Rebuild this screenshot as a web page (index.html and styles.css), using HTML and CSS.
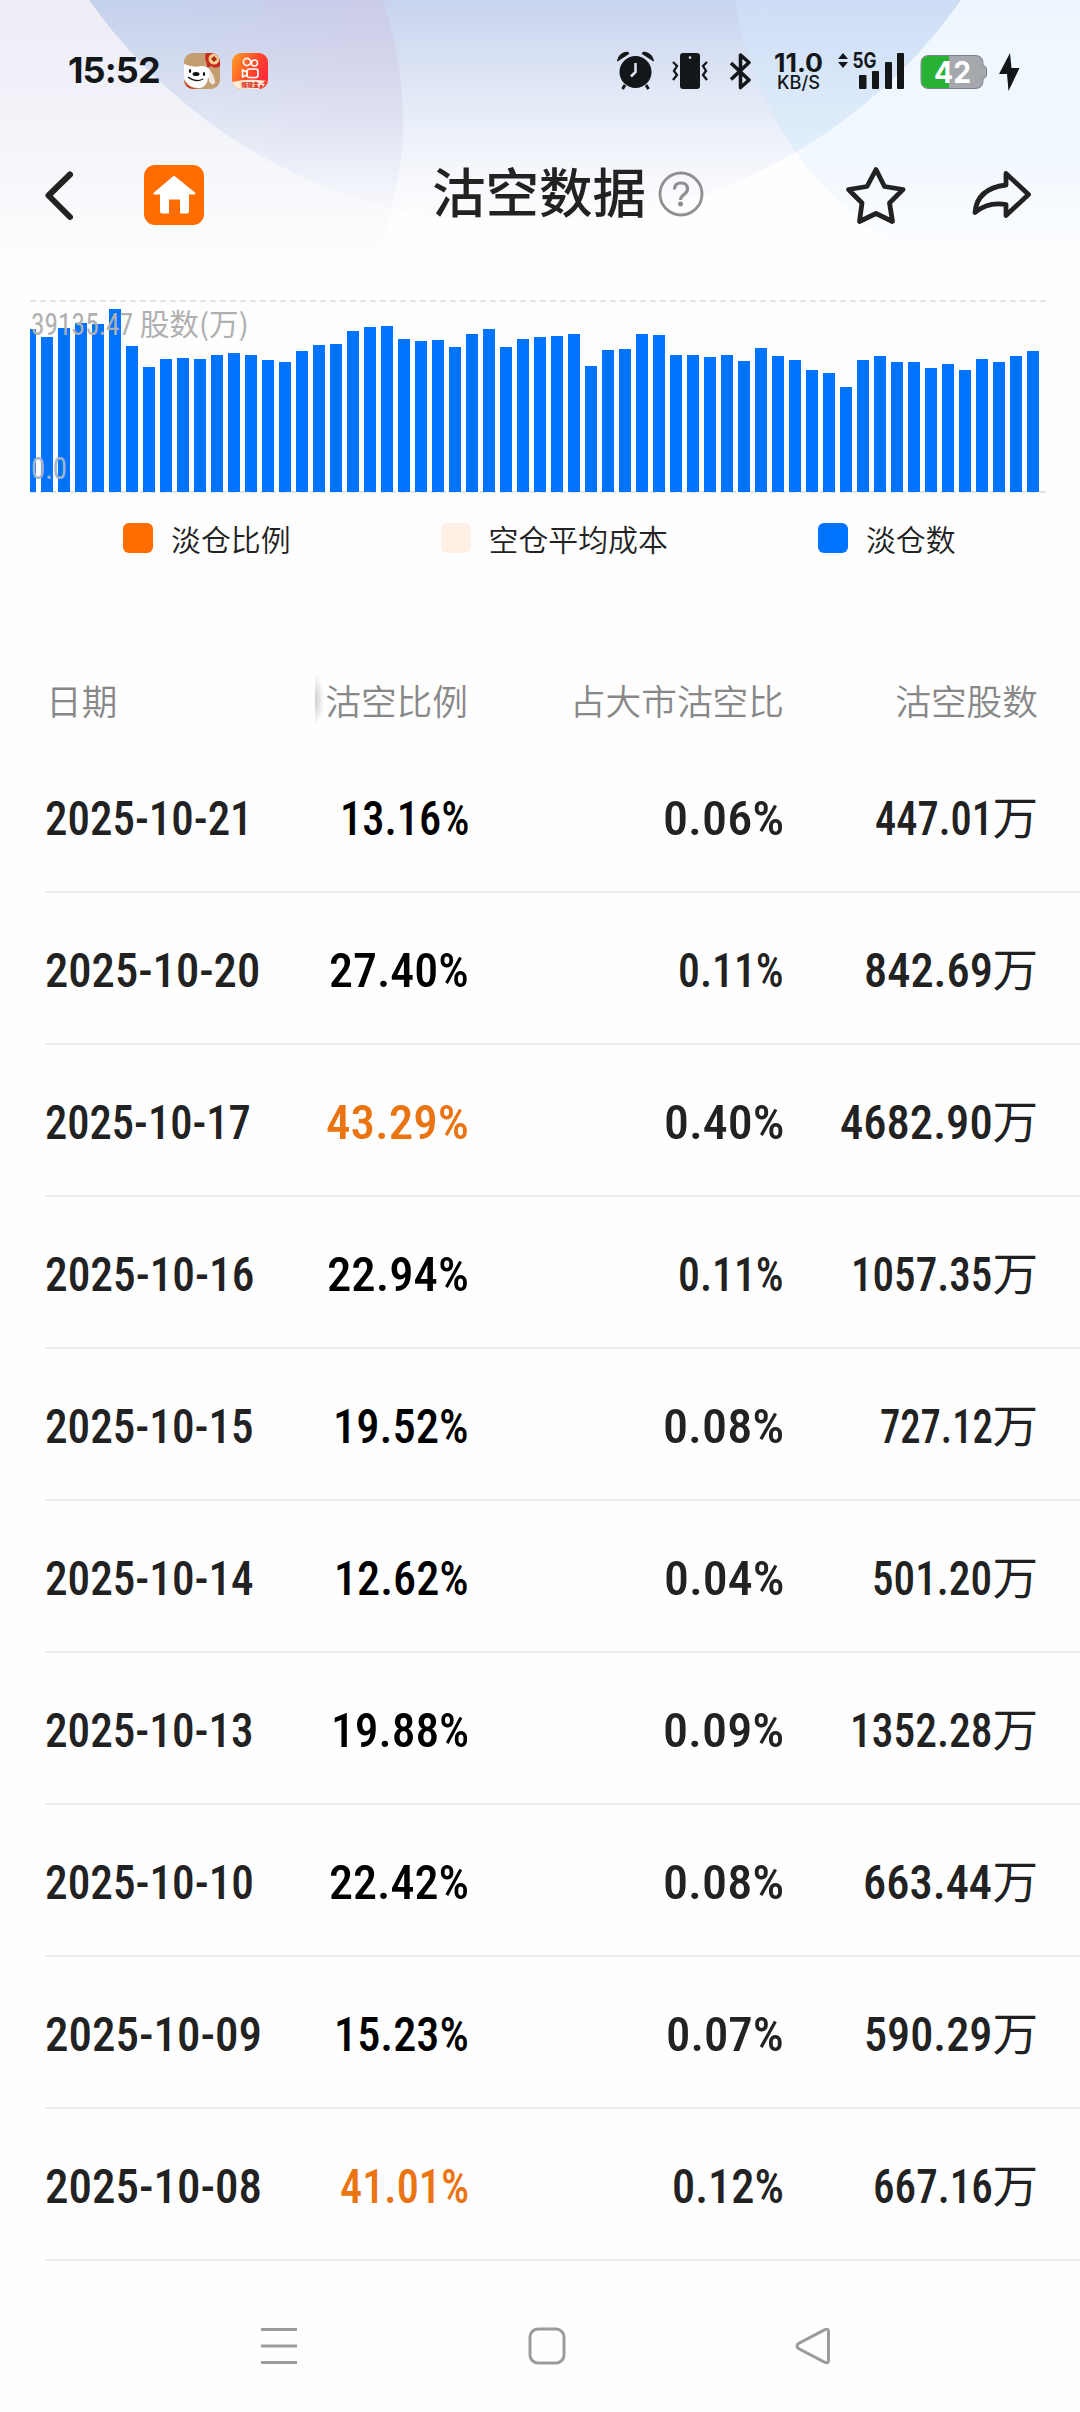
FILE: index.html
```html
<!DOCTYPE html>
<html lang="zh-CN">
<head>
    <meta charset="UTF-8">
    <meta name="viewport" content="width=device-width, initial-scale=1.0">
    <title>沽空数据</title>
    <link rel="stylesheet" href="styles.css">
</head>
<body>
    <svg class="fundo" viewBox="0 0 1080 280">
        <defs>
            <linearGradient id="gA" gradientUnits="userSpaceOnUse" x1="0" y1="0" x2="0" y2="228">
                <stop offset="0" stop-color="#c8d3ee"/>
                <stop offset=".45" stop-color="#e4ebf7"/>
                <stop offset=".8" stop-color="#f8f9fd"/>
                <stop offset="1" stop-color="#fefefe"/>
            </linearGradient>
            <linearGradient id="gB" gradientUnits="userSpaceOnUse" x1="0" y1="0" x2="0" y2="270">
                <stop offset="0" stop-color="#eeecf6"/>
                <stop offset=".4" stop-color="#f1f3f9"/>
                <stop offset="1" stop-color="#fefefe"/>
            </linearGradient>
            <linearGradient id="gC" gradientUnits="userSpaceOnUse" x1="0" y1="0" x2="0" y2="270">
                <stop offset="0" stop-color="#eef7ff"/>
                <stop offset=".6" stop-color="#f2f8ff"/>
                <stop offset="1" stop-color="#fefefe"/>
            </linearGradient>
            <linearGradient id="gAB" gradientUnits="userSpaceOnUse" x1="0" y1="0" x2="0" y2="210">
                <stop offset="0" stop-color="#c5d0eb"/>
                <stop offset=".5" stop-color="#dce3f2"/>
                <stop offset="1" stop-color="#f8f9fd"/>
            </linearGradient>
            <radialGradient id="gRosa" gradientUnits="userSpaceOnUse" cx="370" cy="10" r="190">
                <stop offset="0" stop-color="#dcb8dc" stop-opacity=".2"/>
                <stop offset="1" stop-color="#dcb8dc" stop-opacity="0"/>
            </radialGradient>
            <linearGradient id="gAC" gradientUnits="userSpaceOnUse" x1="0" y1="0" x2="0" y2="155">
                <stop offset="0" stop-color="#cdddf5"/>
                <stop offset="1" stop-color="#e2effb"/>
            </linearGradient>
            <clipPath id="cA"><circle cx="525" cy="-307" r="533"/></clipPath>
        </defs>
        <circle cx="43" cy="120" r="360" fill="url(#gB)"/>
        <circle cx="1084" cy="-50" r="352" fill="url(#gC)"/>
        <circle cx="525" cy="-307" r="533" fill="url(#gA)"/>
        <g clip-path="url(#cA)">
            <circle cx="43" cy="120" r="360" fill="url(#gAB)"/>
            <circle cx="43" cy="120" r="360" fill="url(#gRosa)"/>
            <circle cx="1084" cy="-50" r="352" fill="url(#gAC)"/>
        </g>
    </svg>

    <div id="status">
        <span class="hora">15:52</span>
        <svg class="app" width="36" height="36" viewBox="0 0 36 36">
            <clipPath id="cApp"><rect width="36" height="36" rx="9"/></clipPath>
            <g clip-path="url(#cApp)">
                <rect width="36" height="36" fill="#c49d70"/>
                <path d="M22 0h14v13c-4 3-8 1-9 0l-4 2v-4q-3-6-1-11z" fill="#c72a1d"/>
                <circle cx="30" cy="6" r="5.5" fill="#f7c98a"/>
                <path d="M30 3l3 3-3 3-3-3z" fill="#a9281c"/>
                <path d="M0 28q5 8 15 8H4q-4-2-4-8z" fill="#d5281c"/>
                <path d="M0 11q10 4 17 2 7-1 10 6l4 10q-2 4-5 0l-2-5q0 9-8 11-10 1-16-9z" fill="#fff"/>
                <path d="M25 18q5 2 6 12-4 4-6-3z" fill="#eee7e0"/>
                <ellipse cx="12" cy="21" rx="3.5" ry="2" fill="#161210"/>
                <ellipse cx="6" cy="18" rx="1.2" ry="2" fill="#161210"/>
                <ellipse cx="20" cy="21" rx="1.2" ry="2" fill="#161210"/>
                <path d="M4 24q8 6 15 2" fill="none" stroke="#161210" stroke-width="1.2"/>
            </g>
        </svg>
        <svg class="app" width="36" height="36" viewBox="0 0 36 36">
            <linearGradient id="gK" x1="0" y1="0" x2="1" y2=".5">
                <stop offset="0" stop-color="#ffa325"/>
                <stop offset=".6" stop-color="#ff4a2a"/>
                <stop offset="1" stop-color="#ff2a3a"/>
            </linearGradient>
            <g clip-path="url(#cApp)">
                <rect width="36" height="36" fill="url(#gK)"/>
                <path d="M0 29q16-4 36-1v8H0z" fill="#fdebd3"/>
                <path d="M36 27v9h-9q1-7 9-9z" fill="#f2402c"/>
                <path d="M32 28l-3 4h2l-1 3 3-4h-2z" fill="#fff"/>
                <g fill="none" stroke="#fff" stroke-width="1.6">
                    <circle cx="15" cy="9" r="3.600"/>
                    <circle cx="22.500" cy="10" r="3"/>
                    <rect x="15" y="16" width="11" height="8.500" rx="2.500"/>
                    <path d="M15 19l-4.500-2v7l4.500-2z"/>
                </g>
            </g>
            <text class="txtApp" x="9" y="34">领现金</text>
        </svg>
        <svg class="sistema" width="410" height="44" viewBox="612 48 410 44" fill="#14171a">
            <!-- alarme -->
            <g>
                <circle cx="635.500" cy="71" r="16"/>
                <path d="M617.500 60q1-8 10-9l1.500 1.500zM653.500 60q-1-8-10-9l-1.500 1.500z" stroke="#14171a" stroke-width="1"/>
                <path d="M625 84l-2.500 4M646 84l2.500 4" stroke="#14171a" stroke-width="3"/>
                <path d="M635.500 62v9l-4.500 4.500" fill="none" stroke="#dfe6f4" stroke-width="2.500"/>
            </g>
            <!-- vibrar -->
            <rect x="680" y="52" width="20" height="36" rx="3"/>
            <circle cx="690" cy="56.500" r="1.300" fill="#dfe6f4"/>
            <path d="M673 61l4 4-3 5 3 4-4 5M707 61l-4 4 3 5-3 4 4 5" fill="none" stroke="#14171a" stroke-width="2.300"/>
            <!-- bluetooth -->
            <path d="M731 62l18 17-8.500 7.500V54l8.500 7.500-18 17" fill="none" stroke="#14171a" stroke-width="3.600" stroke-linejoin="round"/>
            <text class="vel" x="774" y="71" textLength="49" lengthAdjust="spacingAndGlyphs">11.0</text>
            <text class="kbs" x="777" y="87.500" textLength="43" lengthAdjust="spacingAndGlyphs">KB/S</text>
            <!-- sinal -->
            <path d="M838 58l5-6 5 6zM838 61h10l-5 6z"/>
            <text class="g5" x="852.500" y="66.500" textLength="24" lengthAdjust="spacingAndGlyphs">5G</text>
            <rect x="859" y="74" width="7.500" height="14" rx="1"/>
            <rect x="872" y="70" width="7" height="18" rx="1"/>
            <rect x="885" y="61" width="7" height="27" rx="1"/>
            <rect x="897" y="52" width="7" height="36" rx="1"/>
            <!-- bateria -->
            <path d="M929 54.500h46q8 0 8 8v2.500h1.500q2 1 2 3v6q0 2-2 3h-1.500v2.500q0 8-8 8h-46q-8 0-8-8v-17q0-8 8-8z" fill="#a5a8ad" stroke="#7b8084"/>
            <path d="M949 55h-20q-7.500 0-7.500 7.500v17q0 7.500 7.500 7.500h20z" fill="#27b234"/>
            <text class="bat" x="934" y="82" textLength="37" lengthAdjust="spacingAndGlyphs">42</text>
            <path d="M1010 52l-11 21h8l1.500 17 11-23h-8z"/>
        </svg>
    </div>

    <div id="topo">
        <svg class="voltar" width="32" height="56" viewBox="44 166 32 56">
            <path d="M71 173.500L49.500 194.500 71 216" class="traco" stroke-width="6"/>
        </svg>
        <svg class="casa" width="60" height="60" viewBox="0 0 60 60">
            <rect width="60" height="60" rx="11" fill="#ff6d00"/>
            <path d="M30 10.500l21 17q1 2-1 2h-5v17q0 2-2 2h-7v-14H25v14h-7q-2 0-2-2v-17h-5q-3 0-1-2z" fill="#fff"/>
        </svg>
        <h1>沽空数据</h1>
        <svg class="ajuda" width="46" height="46" viewBox="0 0 46 46">
            <circle cx="23" cy="22" r="21" fill="none" stroke="#8f8f8f" stroke-width="2.800"/>
            <path d="M16.500 17.500q0-6.500 6.500-6.500t6.500 6q0 3-3.500 5.500-3.500 2.500-3.500 5.500" fill="none" stroke="#8f8f8f" stroke-width="3.200"/>
            <circle cx="22.500" cy="32" r="2.500" fill="#8f8f8f"/>
        </svg>
        <svg class="estrela" width="62" height="62" viewBox="845 164 62 62">
            <path d="M876 169.500l8.500 17 18.500 3-13.500 13.500 3 18.500-16.500-8-16.500 8 2.500-18.500-13.500-13.500 18.500-3z" class="traco" stroke-width="4.800"/>
        </svg>
        <svg class="partilhar" width="62" height="56" viewBox="971 167 62 56">
            <path d="M1006 173.500l22.500 21-22.500 21v-11q-18-3-31 8 2-24 31-27.500z" class="traco" stroke-width="4.800"/>
        </svg>
    </div>

    <div id="grafico">
        <div id="barras"></div>
        <span class="rotulo max"><span class="din" data-w="102">39135.47</span> 股数(万)</span>
        <span class="rotulo min"><span class="din" data-w="36">0.0</span></span>
    </div>
    <div id="legenda">
        <div class="item"><i class="cor laranja"></i>淡仓比例</div>
        <div class="item"><i class="cor creme"></i>空仓平均成本</div>
        <div class="item"><i class="cor azul"></i>淡仓数</div>
    </div>

    <div id="tabela">
        <div class="cabecalho">
            <div class="c1">日期</div>
            <div class="c2">沽空比例</div>
            <div class="c3">占大市沽空比</div>
            <div class="c4">沽空股数</div>
        </div>
    </div>

    <div id="navegacao">
        <svg width="36" height="38" viewBox="0 0 36 38"><path d="M0 2.500h36M0 19h36M0 35.500h36"/></svg>
        <svg width="38" height="38" viewBox="0 0 38 38"><rect x="2" y="2" width="34" height="34" rx="8"/></svg>
        <svg width="36" height="38" viewBox="2 0 36 38"><path d="M29.500 2.800q4-2 4 2v28.400q0 4-4 2L3.500 21.500q-3-2.500 0-5z"/></svg>
    </div>
    <script>
        // altura das barras em px
        const alturas = [162.7,155,164,169.3,168,183,146.3,125.3,133.3,134.3,133.3,136.7,139.3,137.3,131.7,130,140.7,147.3,148,161.3,165,166,153.3,150.7,151.7,145.3,158.3,163.3,145.3,152.7,155.3,156.3,157.7,126.3,142.3,143.3,158.3,157.3,137.3,137.3,135,137.3,131.3,144,136.3,132,122.3,119.3,105.3,131.7,136.3,130.3,130.3,124.3,128.3,122.3,132.7,130.3,135.7,140.7]
        const barras = document.querySelector("#barras")
        alturas.map((h)=>{
            const barra = document.createElement("div")
            barra.setAttribute("class", "barra")
            barra.style.height = `${h}px`
            barras.appendChild(barra)
        })

        const dados = [
            ["2025-10-21", "13.16%", "0.06%", "447.01"],
            ["2025-10-20", "27.40%", "0.11%", "842.69"],
            ["2025-10-17", "43.29%", "0.40%", "4682.90"],
            ["2025-10-16", "22.94%", "0.11%", "1057.35"],
            ["2025-10-15", "19.52%", "0.08%", "727.12"],
            ["2025-10-14", "12.62%", "0.04%", "501.20"],
            ["2025-10-13", "19.88%", "0.09%", "1352.28"],
            ["2025-10-10", "22.42%", "0.08%", "663.44"],
            ["2025-10-09", "15.23%", "0.07%", "590.29"],
            ["2025-10-08", "41.01%", "0.12%", "667.16"]
        ]
        // avanço de cada caractere, o "1" é mais estreito
        const avanco = {"0": 23.8, "1": 16.2, "2": 22.4, "6": 24.2, "7": 20.6, "8": 24.2, "9": 24.2, "-": 18.5, ".": 10.5, "%": 39}
        const largura = (txt) => [...txt].reduce((s, c) => s + (avanco[c] || 23.4), 0)

        const tabela = document.querySelector("#tabela")
        dados.map((ar)=>{
            const linha = document.createElement("div")
            linha.setAttribute("class", "linha")
            ar.map((el, i)=>{
                const cel = document.createElement("div")
                cel.setAttribute("class", `c${i + 1}`)
                if(i == 1 && parseFloat(el) > 40){
                    cel.classList.add("alta")
                }
                cel.innerHTML = `<span class="din" data-w="${largura(el)}">${el}</span>` + (i == 3 ? `<span class="wan">万</span>` : "")
                linha.appendChild(cel)
            })
            tabela.appendChild(linha)
        })

        // ajusta a largura dos números
        const nums = [...document.querySelectorAll(".din")]
        nums.map((el)=>{
            const w = parseFloat(el.dataset.w)
            const real = el.getBoundingClientRect().width
            el.style.transform = `scaleX(${w / real})`
            el.style.marginRight = `${w - real}px`
        })
    </script>
</body>
</html>
```
FILE: styles.css
```css
@charset "UTF-8";
*{
    border: none;
    padding: 0px;
    margin: 0px;
    box-sizing: border-box;
}
body{
    width: 1080px;
    height: 2412px;
    background-color: #fefefe;
    color: #222;
    font-family: "Noto Sans CJK SC", sans-serif;
    position: relative;
    overflow: hidden;
}
svg{
    display: block;
    flex-shrink: 0;
    overflow: visible;
}
.fundo{
    position: absolute;
    top: 0px;
    left: 0px;
    width: 1080px;
    height: 280px;
    z-index: -1;
    overflow: hidden;
}
#status{
    display: flex;
    align-items: center;
    height: 142px;
    padding-left: 68px;
}
.hora{
    font: 650 36px/44px Inter, sans-serif;
    letter-spacing: -0.9px;
    color: #14171a;
    width: 116px;
    padding-bottom: 3px;
    white-space: nowrap;
}
.app{
    margin-right: 12px;
}
.txtApp{
    font-size: 6px;
    font-weight: 900;
    fill: #d8301c;
}
.sistema{
    margin-left: 332px;
}
.vel, .kbs, .g5, .bat{
    font-family: Inter, sans-serif;
    font-weight: 650;
}
.vel{
    font-size: 25px;
}
.kbs{
    font-size: 18px;
    font-weight: 550;
}
.g5{
    font-size: 21px;
    font-weight: 700;
}
.bat{
    font-size: 30px;
    font-weight: 750;
    fill: #fff;
}
#topo{
    display: flex;
    align-items: center;
    height: 106px;
    padding-left: 44px;
}
.traco{
    fill: none;
    stroke: #222;
    stroke-linecap: round;
    stroke-linejoin: round;
}
.voltar{
    margin-left: -1px;
}
.casa{
    margin-left: 69px;
}
h1{
    margin-left: 228px;
    width: 226px;
    font-size: 53.500px;
    font-weight: 500;
    line-height: 80px;
    white-space: nowrap;
    padding-bottom: 10px;
}
.estrela{
    margin-left: 141px;
}
.partilhar{
    margin-left: 64px;
}
#grafico{
    position: relative;
    margin: 52px 34px 0px 30px;
    height: 193px;
}
#grafico::before, #grafico::after{
    content: "";
    position: absolute;
    left: 0px;
    right: 0px;
    height: 2px;
    z-index: -1;
    background: repeating-linear-gradient(90deg, #e3e3e3 0px 6px, transparent 6px 10px);
}
#grafico::before{
    top: 0px;
}
#grafico::after{
    bottom: 0px;
}
#barras{
    display: flex;
    align-items: flex-end;
    gap: 5px;
    height: 192px;
}
.barra{
    width: 12px;
    background-color: #0073ff;
}
.barra:first-child{
    width: 6px;
}
.rotulo{
    position: absolute;
    left: 1px;
    color: #b0b0b0;
    font-size: 29.700px;
    line-height: 40px;
    white-space: nowrap;
}
.rotulo .din{
    font-size: 30.500px;
    font-weight: 400;
}
.rotulo.max{
    top: 3px;
}
.rotulo.min{
    top: 147px;
    color: #a3b4cd;
}
#legenda{
    display: flex;
    gap: 150px;
    padding: 15px 0px 0px 123px;
    height: 162px;
}
.item{
    display: flex;
    align-items: center;
    height: 60px;
    font-size: 29.900px;
    font-weight: 350;
    line-height: 44px;
    white-space: nowrap;
    padding-bottom: 1px;
}
.cor{
    width: 30px;
    height: 30px;
    border-radius: 6px;
    margin-right: 18px;
}
.laranja{
    background-color: #ff6d00;
}
.creme{
    background-color: #fff0e6;
}
.azul{
    background-color: #0073ff;
}
#tabela{
    padding-left: 45px;
}
.cabecalho, .linha{
    display: grid;
    grid-template-columns: 270px 154px 315px 254px;
    align-items: center;
}
.cabecalho{
    height: 86px;
    padding-top: 2px;
    font-size: 35.700px;
    font-weight: 350;
    color: #888;
}
.cabecalho .c1{
    padding-left: 1px;
}
.cabecalho .c2{
    padding-right: 1px;
    background: radial-gradient(ellipse 9px 26px at left center, #ccc, transparent);
}
.linha{
    height: 152px;
    border-bottom: 2px solid #ececec;
}
.linha .c1, .linha .c2, .linha .c3{
    padding-top: 5px;
}
.c2, .c3, .c4{
    text-align: right;
    white-space: nowrap;
}
.din{
    display: inline-block;
    font-family: Roboto, sans-serif;
    font-size: 49px;
    font-weight: 460;
    font-stretch: 78%;
    transform-origin: left center;
}
.linha .c2{
    color: #000;
}
.linha .c2.alta{
    color: #eb7412;
}
.wan{
    font-size: 45.500px;
    line-height: 60px;
}
#navegacao{
    display: flex;
    padding: 66px 0px 0px 261px;
    gap: 231px;
}
#navegacao svg{
    fill: none;
    stroke: #9b9b9b;
    stroke-width: 3;
}
```
